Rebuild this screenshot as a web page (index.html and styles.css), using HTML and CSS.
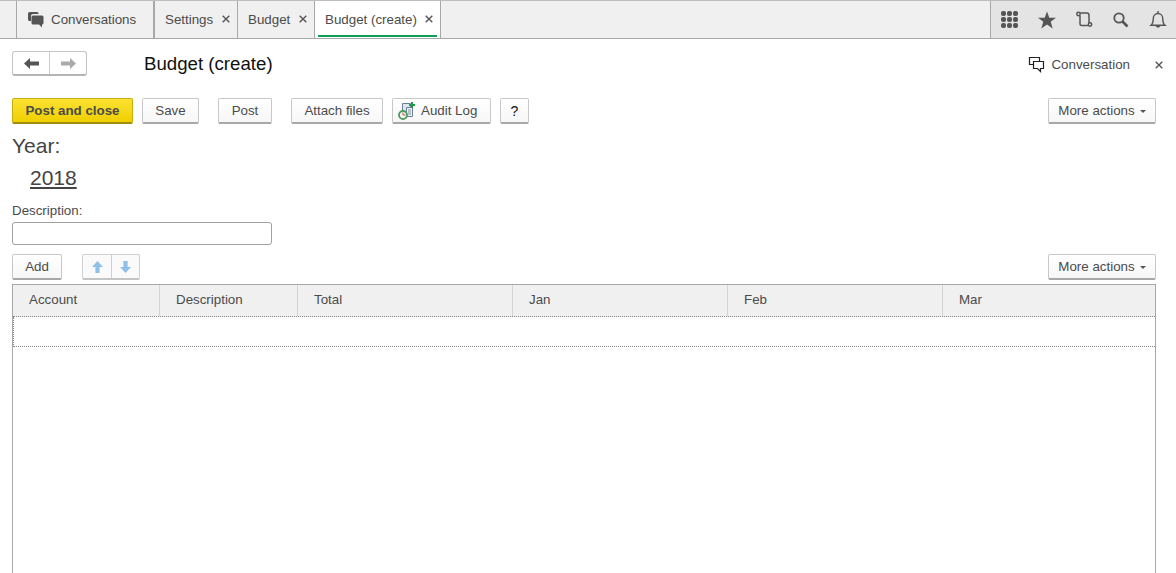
FILE: index.html
```html
<!DOCTYPE html>
<html lang="en">
<head>
<meta charset="utf-8">
<title>Budget (create)</title>
<link rel="stylesheet" href="styles.css">
</head>
<body>
<header class="tabbar">
  <nav class="tabs">
    <div class="tab tab-conv">
      <svg width="16" height="17" viewBox="0 0 16 17"><path fill="#555" d="M1.500 1h7.500q1.500 0 1.500 1.500V3H5q-2 0-2 2v5H1.500Q0 10 0 8.500v-6Q0 1 1.500 1z"/><path fill="#555" d="M5 4.500h9q1.500 0 1.500 1.500v6q0 1.500-1.500 1.500v3l-3-3H5q-1.500 0-1.500-1.500V6Q3.500 4.500 5 4.500z"/></svg>
      <span>Conversations</span>
    </div>
    <div class="tab tab-settings"><span>Settings</span><svg class="x" viewBox="0 0 8 8"><path d="M.7.7l6.600 6.600M7.300.7L.7 7.300"/></svg></div>
    <div class="tab tab-budget"><span>Budget</span><svg class="x" viewBox="0 0 8 8"><path d="M.7.7l6.600 6.600M7.300.7L.7 7.300"/></svg></div>
    <div class="tab tab-active"><span>Budget (create)</span><svg class="x" viewBox="0 0 8 8"><path d="M.7.7l6.600 6.600M7.300.7L.7 7.300"/></svg></div>
  </nav>
  <div class="tools">
    <svg width="18" height="18" viewBox="0 0 18 18" fill="#555"><rect x="0" y="0" width="5" height="5" rx="2"/><rect x="6" y="0" width="5" height="5" rx="2"/><rect x="12" y="0" width="5" height="5" rx="2"/><rect x="0" y="6" width="5" height="5" rx="2"/><rect x="6" y="6" width="5" height="5" rx="2"/><rect x="12" y="6" width="5" height="5" rx="2"/><rect x="0" y="12" width="5" height="5" rx="2"/><rect x="6" y="12" width="5" height="5" rx="2"/><rect x="12" y="12" width="5" height="5" rx="2"/></svg>
    <svg width="18" height="18" viewBox="0 0 18 18" fill="#555"><path d="M9 0.500l2.300 6.200H18l-5.300 4 2 6.800L9 13.500 3.300 17.500l2-6.800L0 6.700h6.700z"/></svg>
    <svg width="18" height="18" viewBox="0 0 18 18" fill="none" stroke="#555" stroke-width="1.500"><circle cx="3.500" cy="3" r="1.700"/><path d="M5.200 2H12q2 0 2 2.500v7.500"/><path d="M5 4.500v8.500q0 1.500 1.500 1.500h7"/><circle cx="15" cy="13.500" r="1.700"/></svg>
    <svg width="18" height="18" viewBox="0 0 18 18" fill="none" stroke="#555"><circle cx="7" cy="7" r="4.700" stroke-width="1.800"/><path d="M10.500 10.500l5 5" stroke-width="2.600"/></svg>
    <svg width="18" height="18" viewBox="0 0 18 18" fill="none" stroke="#555" stroke-width="1.400"><path d="M2 14.200c1.800-1.500 2.300-3 2.300-7a4.700 4.700 0 0 1 9.400 0c0 4 .5 5.500 2.300 7z"/><path d="M9 0v2"/><path d="M6.500 15q2.500 3.500 5 0z" fill="#555" stroke="none"/></svg>
  </div>
</header>

<main class="page">
  <div class="title-row">
    <div class="nav-btns">
      <button class="nav-btn"><svg width="15" height="11" viewBox="0 0 15 11" fill="#555"><path d="M0 5.500L6 0v3.500h9v4H6V11z"/></svg></button>
      <button class="nav-btn"><svg width="15" height="11" viewBox="0 0 15 11" fill="#aaa"><path d="M15 5.500L9 0v3.500H0v4h9V11z"/></svg></button>
    </div>
    <h1 class="title">Budget (create)</h1>
    <div class="conv-link">
      <svg width="17" height="17" viewBox="0 0 17 17" fill="#fff" stroke="#222" stroke-width="1.200"><path d="M1.500 1.500h10v7h-10z"/><path d="M5.500 5.500h10v7h-3v3l-3-3h-4z"/></svg>
      <span>Conversation</span>
    </div>
    <svg class="x close" viewBox="0 0 8 8"><path d="M.7.7l6.600 6.600M7.300.7L.7 7.300"/></svg>
  </div>

  <div class="toolbar">
    <button class="btn primary">Post and close</button>
    <button class="btn save">Save</button>
    <button class="btn post">Post</button>
    <button class="btn attach">Attach files</button>
    <button class="btn audit">
      <svg width="17" height="18" viewBox="0 0 17 18"><path fill="#dfe6ee" stroke="#6c7f94" d="M4.500 1.500h8v11h-8z"/><path fill="#eef2f6" stroke="#6c7f94" d="M8.500 5.500h6v9h-6z"/><path stroke="#7c8fa4" d="M10 8h3M10 10h3M10 12h3"/><path fill="none" stroke="#1e9a4b" stroke-width="2" d="M14 0v6M11 3h6"/><circle cx="5" cy="13" r="4" fill="#f4f4f4" stroke="#4f9a5f" stroke-width="1.800"/><path stroke="#b5652b" d="M5 10.500V13h2.500" fill="none"/></svg>
      <span>Audit Log</span>
    </button>
    <button class="btn help">?</button>
    <button class="btn more">More actions<i class="caret"></i></button>
  </div>

  <div class="year-label">Year:</div>
  <a class="year-value">2018</a>

  <label class="desc-label" for="desc">Description:</label>
  <input class="desc-input" id="desc" type="text">

  <div class="table-bar">
    <button class="btn add">Add</button>
    <div class="move-btns">
      <button class="move-btn move-up"><svg width="11" height="12" viewBox="0 0 13 14" preserveAspectRatio="none" fill="#8fc0e8"><path d="M6.500 0L13 7H9v7H4V7H0z"/></svg></button>
      <button class="move-btn"><svg width="11" height="12" viewBox="0 0 13 14" preserveAspectRatio="none" fill="#8fc0e8"><path d="M6.500 14L13 7H9V0H4v7H0z"/></svg></button>
    </div>
    <button class="btn more">More actions<i class="caret"></i></button>
  </div>

  <section class="grid">
    <div class="grid-head">
      <div class="col c-account">Account</div>
      <div class="col c-desc">Description</div>
      <div class="col c-total">Total</div>
      <div class="col c-month">Jan</div>
      <div class="col c-month">Feb</div>
      <div class="col c-last">Mar</div>
    </div>
    <div class="grid-row"></div>
  </section>
</main>
</body>
</html>
```
FILE: styles.css
```css
* { box-sizing: border-box; }
html, body { margin: 0; height: 100%; overflow: hidden; }
body { background: #fff; font-family: "Liberation Sans", Arial, sans-serif; font-size: 13.33px; color: #4b4b4b; }
button { font-family: inherit; }

.tabbar { height: 39px; display: flex; justify-content: space-between; background: #f0f0f0; border-top: 1px solid #bdbdbd; border-bottom: 1px solid #a8a8a8; }
.tabs { display: flex; padding-left: 16px; }
.tab { display: flex; align-items: center; height: 37px; border-left: 1px solid #a8a8a8; padding-bottom: 1px; }
.tab-conv { width: 138px; padding-left: 11px; gap: 7px; border-right: 1px solid #a8a8a8; }
.tab-settings { width: 83px; padding-left: 10px; gap: 9px; }
.tab-budget { width: 77px; padding-left: 10px; gap: 9px; }
.tab-active { width: 127px; padding-left: 10px; gap: 8px; background: #fff; border-right: 1px solid #a8a8a8; position: relative; }
.tab-active::after { content: ""; position: absolute; left: 3px; right: 3px; bottom: 1px; height: 2px; background: #0f9d58; }
.x { width: 8px; height: 8px; fill: none; stroke: #555; stroke-width: 1.400; flex: none; }

.tools { width: 186px; display: flex; align-items: flex-start; gap: 19px; padding: 10px 0 0 10px; background: #e4e4e4; border-left: 1px solid #a8a8a8; }

.page { padding: 0 20px 0 12px; }
.title-row { display: flex; align-items: center; height: 49px; }
.nav-btns { display: flex; width: 75px; height: 25px; background: #fff; border: 1px solid #c4c4c4; border-bottom: 2px solid #b4b4b4; border-radius: 3px; }
.nav-btn { flex: 1; padding: 0; border: 0; background: transparent; display: flex; align-items: center; justify-content: center; }
.nav-btn + .nav-btn { border-left: 1px solid #ccc; }
.title { margin: 0 0 0 57px; font-size: 18.670px; font-weight: 400; color: #111; }
.conv-link { margin-left: auto; padding-top: 2px; display: flex; align-items: center; gap: 6px; color: #4b4b4b; }
.close { margin-left: 25px; margin-right: -7px; margin-top: 2px; }

.toolbar { display: flex; margin-top: 10px; height: 26px; }
.btn { height: 26px; padding: 0; font-size: 13.33px; color: #4b4b4b; background: linear-gradient(#fff, #f7f7f7); border: 1px solid #c8c8c8; border-bottom: 2px solid #a8a8a8; border-radius: 2px; display: inline-flex; align-items: center; justify-content: center; }
.primary { width: 121px; font-weight: 700; background: linear-gradient(#fbe232, #f0cf00); border-color: #c9ad10; border-bottom-color: #a08c10; }
.save { width: 57px; margin-left: 9px; }
.post { width: 54px; margin-left: 19px; }
.attach { width: 92px; margin-left: 19px; }
.audit { width: 99px; margin-left: 9px; gap: 6px; justify-content: flex-start; padding-left: 5px; }
.help { width: 29px; margin-left: 9px; color: #111; font-size: 14px; }
.more { width: 108px; margin-left: auto; }
.caret { display: inline-block; margin-left: 5px; margin-top: 2px; border: 3px solid transparent; border-top-color: #555; border-bottom: 0; }

.year-label { margin-top: 10px; font-size: 21px; line-height: 24px; color: #444; }
.year-value { display: block; margin: 8px 0 0 18px; font-size: 21px; line-height: 24px; color: #444; text-decoration: underline; }
.desc-label { display: block; margin-top: 14px; font-size: 13.33px; line-height: 14px; color: #4b4b4b; }
.desc-input { display: block; margin-top: 4px; width: 260px; height: 23px; border: 1px solid #a0a0a0; border-radius: 3px; background: #fff; }

.table-bar { display: flex; margin-top: 9px; height: 26px; }
.add { width: 50px; }
.move-btns { display: flex; width: 58px; margin-left: 20px; height: 26px; background: #fafafa; border: 1px solid #d0d0d0; border-bottom: 2px solid #c4c4c4; border-radius: 2px; }
.move-btn { flex: 1; padding: 0; border: 0; background: transparent; display: flex; align-items: center; justify-content: center; }
.move-up { flex: none; width: 28px; }
.move-btn + .move-btn { border-left: 1px solid #d0d0d0; }

.grid { margin-top: 4px; height: 300px; border: 1px solid #a8a8a8; border-bottom: 0; }
.grid-head { display: flex; height: 32px; background: #f0f0f0; border-bottom: 1px dotted #888; }
.col { height: 31px; line-height: 29px; padding-left: 16px; border-right: 1px solid #d4d4d4; }
.c-account { width: 147px; }
.c-desc { width: 138px; }
.c-total { width: 215px; }
.c-month { width: 215px; }
.c-last { flex: 1; border-right: 0; }
.grid-row { height: 30px; border-bottom: 1px dotted #888; border-left: 1px dotted #888; }
```
